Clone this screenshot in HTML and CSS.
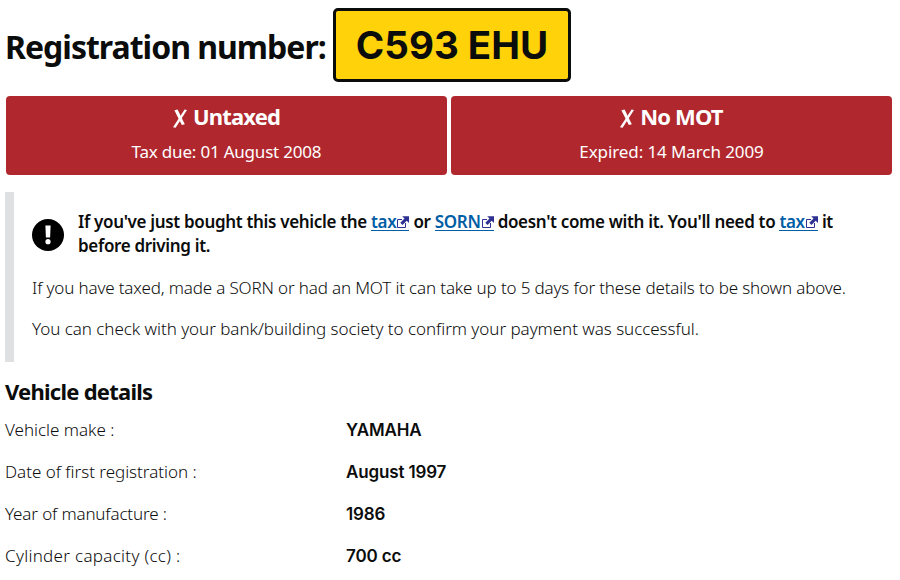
FILE: index.html
```html
<!DOCTYPE html>
<html lang="en">

<head>
    <meta charset="UTF-8">
    <meta name="viewport" content="width=device-width, initial-scale=1.0">
    <title>Vehicle details</title>
    <link rel="stylesheet" href="styles.css">
</head>

<body>
    <svg class="symbols" width="0" height="0">
        <symbol id="external" viewBox="0 0 12 12">
            <path d="M5 3.5H0.5v8h8V7" fill="none" stroke="currentColor" stroke-width="1"/>
            <path d="M5.2 0.3H12V7L9.7 4.7L5.5 9L3.3 6.8L7.5 2.6z" fill="currentColor"/>
        </symbol>
        <symbol id="cross" viewBox="0 0 14 19">
            <path d="M1.4 1.2L4.6 0.4L11.8 15.2L8.8 16z" fill="currentColor"/>
            <path d="M11.6 0.5L14 1L2.6 18.8L0 18.2z" fill="currentColor"/>
        </symbol>
    </svg>

    <main id="content">
        <h1 class="registration">
            <span class="registration-label">Registration number:</span>
            <span class="reg-plate">C593 EHU</span>
        </h1>

        <div class="status-bar">
            <div class="status-box">
                <h2><svg class="cross"><use href="#cross"/></svg>Untaxed</h2>
                <p class="tax-due">Tax due: 01 August 2008</p>
            </div>
            <div class="status-box">
                <h2 class="no-mot"><svg class="cross"><use href="#cross"/></svg>No MOT</h2>
                <p class="mot-expired">Expired: 14 March 2009</p>
            </div>
        </div>

        <div class="notice">
            <div class="notice-important">
                <svg class="icon-important" viewBox="0 0 32 32">
                    <circle cx="16" cy="16" r="16" fill="#000"/>
                    <path d="M13.4 6.5h5.2l-0.5 12h-4.2z" fill="#fff"/>
                    <circle cx="16" cy="22.7" r="2.6" fill="#fff"/>
                </svg>
                <strong><span class="line-one">If you've just bought this vehicle the <a href="#">tax<svg class="icon-external"><use href="#external"/></svg></a> or <a href="#">SORN<svg class="icon-external"><use href="#external"/></svg></a> doesn't come with it. You'll need to <a href="#">tax<svg class="icon-external"><use href="#external"/></svg></a> it</span> <span class="line-two">before driving it.</span></strong>
            </div>
            <p class="delay">If you have taxed, made a SORN or had an MOT it can take up to 5 days for these details to be shown above.</p>
            <p class="payment">You can check with your bank/building society to confirm your payment was successful.</p>
        </div>

        <h2 class="details-title">Vehicle details</h2>
        <dl class="details">
            <dt>Vehicle make :</dt>
            <dd>YAMAHA</dd>
            <dt>Date of first registration :</dt>
            <dd>August 1997</dd>
            <dt class="year">Year of manufacture :</dt>
            <dd>1986</dd>
            <dt class="capacity">Cylinder capacity (cc) :</dt>
            <dd>700 cc</dd>
        </dl>
    </main>
</body>

</html>
```
FILE: styles.css
```css
body {
    font-family: "Noto Sans", "Open Sans", sans-serif;
    font-size: 17px;
    font-weight: 300;
    line-height: 24px;
    color: #0b0c0c;
    background-color: #fff;
    margin: 0;
}

h1, h2, p, dl, dd {
    margin: 0;
}

h2 {
    font-weight: 700;
}

.symbols {
    display: block;
}

#content {
    padding: 8px 8px 0 5px;
}

.registration {
    display: flex;
    align-items: center;
    height: 74px;
    font-size: 33px;
    font-weight: 700;
}

.registration-label {
    width: 328px;
    white-space: nowrap;
    margin-top: 4px;
    font-size: 32px;
    letter-spacing: -1px;
}

.reg-plate {
    box-sizing: border-box;
    width: 238px;
    height: 74px;
    border: 3px solid #0b0c0c;
    border-radius: 5px;
    background-color: #ffd20a;
    font-family: Inter, "Noto Sans", sans-serif;
    font-size: 38.5px;
    line-height: 68px;
    text-align: center;
    white-space: nowrap;
}

.status-bar {
    display: grid;
    grid-template-columns: 1fr 1fr;
    gap: 4px;
    margin: 14px 0 0 1px;
}

.status-box {
    height: 79px;
    box-sizing: border-box;
    padding-top: 6px;
    border-radius: 4px;
    background-color: #b0282e;
    color: #fff;
    text-align: center;
}

.status-box h2 {
    font-size: 22px;
    line-height: 28px;
    letter-spacing: -0.85px;
}

.status-box p {
    margin-top: 10px;
    letter-spacing: -0.2px;
    font-weight: 400;
}

.status-box .mot-expired {
    letter-spacing: -0.1px;
}

.cross {
    width: 14px;
    height: 19px;
    margin-right: 6px;
    vertical-align: -3px;
}

.notice {
    box-sizing: border-box;
    height: 170px;
    margin-top: 17px;
    padding: 18px 0 0 18px;
    border-left: 9px solid #dee0e2;
}

.notice-important {
    display: flex;
    align-items: center;
    height: 48px;
}

.icon-important {
    flex: none;
    width: 32px;
    height: 32px;
    margin-right: 14px;
    margin-top: 2px;
}

.notice strong {
    font-weight: 600;
    letter-spacing: -0.33px;
}

.notice strong span {
    display: block;
    white-space: nowrap;
}

.notice p {
    margin-top: 18px;
    white-space: nowrap;
    letter-spacing: -0.15px;
}

.notice .payment {
    margin-top: 17px;
    letter-spacing: -0.04px;
}

a {
    color: #005ea5;
    text-decoration: none;
    border-bottom: 1px solid #005ea5;
    display: inline-block;
    line-height: 17px;
}

.icon-external {
    width: 12px;
    height: 12px;
    margin-left: 1px;
    color: #2e3191;
}

.details-title {
    margin-top: 15px;
    font-size: 22px;
    line-height: 28px;
    letter-spacing: -0.75px;
}

.details {
    display: grid;
    grid-template-columns: 341px 1fr;
    grid-auto-rows: 42px;
    margin-top: 13px;
}

.details dt {
    letter-spacing: -0.02px;
}

.details .year {
    letter-spacing: -0.15px;
}

.details .capacity {
    letter-spacing: 0.3px;
}

.details dd {
    font-family: Inter, "Noto Sans", sans-serif;
    font-weight: 600;
    letter-spacing: -0.15px;
}
```
